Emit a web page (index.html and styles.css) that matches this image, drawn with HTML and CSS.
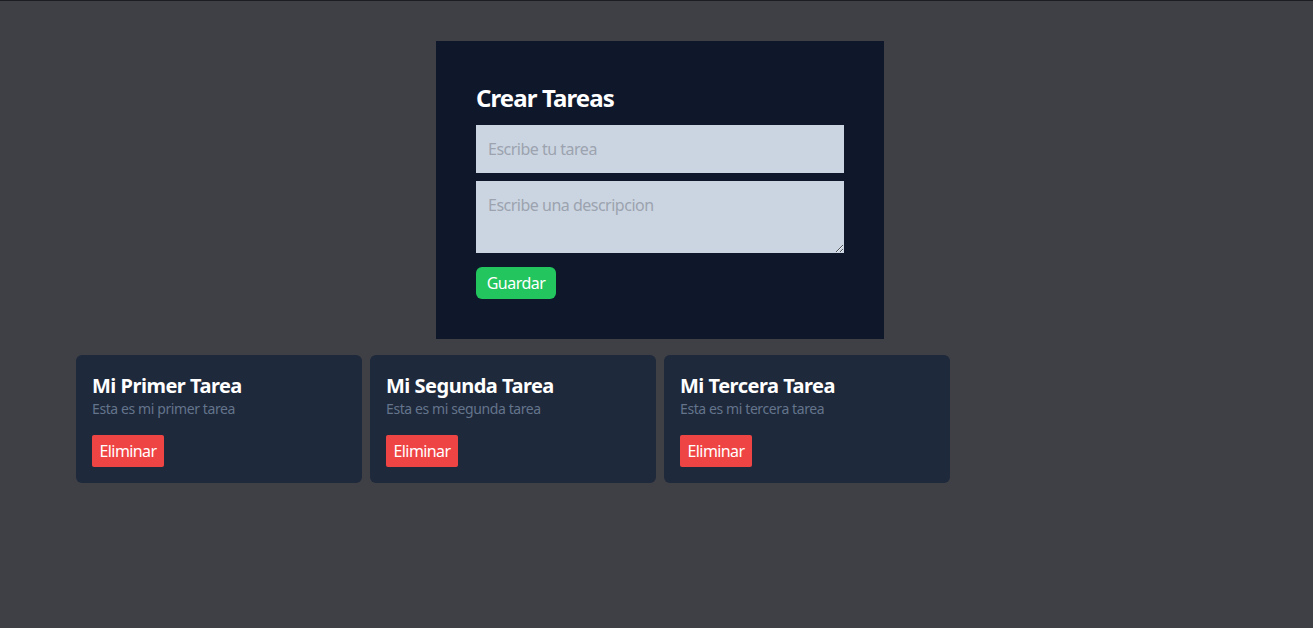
FILE: index.html
```html
<!DOCTYPE html>
<html lang="es">
<head>
<meta charset="utf-8">
<title>Tareas</title>
<link rel="stylesheet" href="styles.css">
</head>
<body>
<main class="page">
  <form class="task-form">
    <h1 class="form-title">Crear Tareas</h1>
    <input class="field" type="text" placeholder="Escribe tu tarea">
    <textarea class="field field-area" rows="2" placeholder="Escribe una descripcion"></textarea>
    <button type="button" class="btn-save">Guardar</button>
  </form>
  <section class="task-grid">
    <div class="task-card">
      <h2 class="task-title">Mi Primer Tarea</h2>
      <p class="task-desc">Esta es mi primer tarea</p>
      <button type="button" class="btn-delete">Eliminar</button>
    </div>
    <div class="task-card">
      <h2 class="task-title">Mi Segunda Tarea</h2>
      <p class="task-desc">Esta es mi segunda tarea</p>
      <button type="button" class="btn-delete">Eliminar</button>
    </div>
    <div class="task-card">
      <h2 class="task-title">Mi Tercera Tarea</h2>
      <p class="task-desc">Esta es mi tercera tarea</p>
      <button type="button" class="btn-delete">Eliminar</button>
    </div>
  </section>
</main>
</body>
</html>
```
FILE: styles.css
```css
* { box-sizing: border-box; }
html, body {
  margin: 0;
  padding: 0;
}
body {
  min-height: 100vh;
  background: #3f3f46;
  border-top: 1px solid #1c1c21;
  font-family: "Noto Sans", "Open Sans", sans-serif;
  color: #fff;
}
.page {
  width: 1168px;
  margin-left: 76px;
  padding-top: 40px;
}
.task-form {
  width: 448px;
  margin: 0 auto;
  background: #0f172a;
  padding: 40px;
}
.form-title {
  margin: 0 0 12px 0;
  padding-top: 1px;
  height: 32px;
  font-size: 24px;
  line-height: 32px;
  font-weight: 700;
  letter-spacing: -0.9px;
  color: #fff;
}
.field {
  display: block;
  width: 100%;
  background: #cbd5e1;
  border: 0;
  border-radius: 0;
  padding: 12px;
  margin: 0 0 8px 0;
  font-family: inherit;
  font-size: 16px;
  line-height: 24px;
  letter-spacing: -0.5px;
  color: #111;
  outline: none;
}
.field::placeholder { color: #9ca3af; }
.field-area {
  height: 72px;
  margin-bottom: 14px;
  resize: vertical;
}
.btn-save {
  display: block;
  width: 80px;
  background: #22c55e;
  color: #fff;
  border: 0;
  border-radius: 6px;
  padding: 4px 0;
  font-family: inherit;
  font-size: 16px;
  line-height: 24px;
  letter-spacing: -0.5px;
  text-align: center;
  cursor: pointer;
}
.task-grid {
  display: grid;
  grid-template-columns: repeat(4, 1fr);
  gap: 8px;
  margin-top: 16px;
}
.task-card {
  background: #1e293b;
  border-radius: 6px;
  padding: 16px;
}
.task-title {
  margin: 0;
  padding-top: 1px;
  height: 28px;
  font-size: 20px;
  line-height: 28px;
  font-weight: 700;
  letter-spacing: -0.5px;
  color: #fff;
}
.task-desc {
  margin: 0;
  font-size: 14px;
  line-height: 20px;
  letter-spacing: -0.4px;
  color: #64748b;
}
.btn-delete {
  display: block;
  width: 72px;
  margin-top: 16px;
  background: #ef4444;
  color: #fff;
  border: 0;
  border-radius: 2px;
  padding: 4px 0;
  font-family: inherit;
  font-size: 16px;
  line-height: 24px;
  letter-spacing: -0.6px;
  text-align: center;
  cursor: pointer;
}
```
